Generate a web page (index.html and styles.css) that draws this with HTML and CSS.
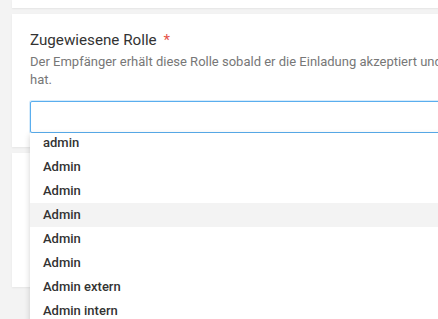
FILE: index.html
```html
<!DOCTYPE html>
<html lang="de">
<head>
  <meta charset="UTF-8">
  <title>Einladung</title>
  <link rel="stylesheet" href="styles.css">
</head>
<body>
  <div class="page">
    <div class="card card-top"></div>

    <div class="card card-field">
      <label class="field-label" for="rolle">Zugewiesene Rolle <span class="required">*</span></label>
      <p class="field-help">Der Empfänger erhält diese Rolle sobald er die Einladung akzeptiert und registriert hat.</p>

      <div class="select-wrap">
        <input type="text" id="rolle" class="select-input">
        <ul class="dropdown">
          <li>admin</li>
          <li>Admin</li>
          <li>Admin</li>
          <li class="active">Admin</li>
          <li>Admin</li>
          <li>Admin</li>
          <li>Admin extern</li>
          <li>Admin intern</li>
        </ul>
      </div>
    </div>

    <div class="card card-next"></div>
  </div>
</body>
</html>
```

FILE: styles.css
```css
html, body {
  height: 100%;
}

body {
  margin: 0;
  background: #f3f3f3;
  font-family: Roboto, "Noto Sans", Arial, sans-serif;
  color: #333;
  overflow: hidden;
}

.page {
  width: 560px;
  padding: 0 0 60px 12px;
  display: flex;
  flex-direction: column;
  gap: 6px;
}

.card {
  background: #fff;
  box-shadow: 0 1px 2px rgba(0, 0, 0, 0.06);
}

.card-top {
  height: 8px;
}

.card-field {
  height: 133px;
  box-sizing: border-box;
  padding: 15px 0 0 18px;
}

.card-next {
  height: 134px;
}

.field-label {
  display: block;
  font-size: 15.2px;
  line-height: 22px;
  color: #333;
}

.required {
  color: #e5534b;
  margin-left: 3px;
}

.field-help {
  margin: 2px 0 0;
  font-size: 13px;
  line-height: 18px;
  color: #777;
  width: 490px;
}

.select-wrap {
  position: relative;
  z-index: 5;
  margin-top: 12px;
}

.select-input {
  display: block;
  width: 100%;
  height: 32px;
  box-sizing: border-box;
  border: 1px solid #5aaeee;
  border-radius: 2px;
  box-shadow: 0 0 0 1px rgba(90, 174, 238, 0.25);
  outline: none;
  background: #fff;
}

.dropdown {
  position: absolute;
  top: 32px;
  left: 0;
  right: 0;
  margin: 0;
  padding: 0;
  list-style: none;
  background: #fff;
  box-shadow: 0 2px 6px rgba(0, 0, 0, 0.18);
}

.dropdown li {
  height: 24px;
  line-height: 24px;
  padding-left: 13px;
  font-size: 13px;
  font-weight: 500;
  color: #333;
}

.dropdown li:first-child {
  height: 22px;
  line-height: 20px;
}

.dropdown li.active {
  background: #f3f3f3;
}
```
